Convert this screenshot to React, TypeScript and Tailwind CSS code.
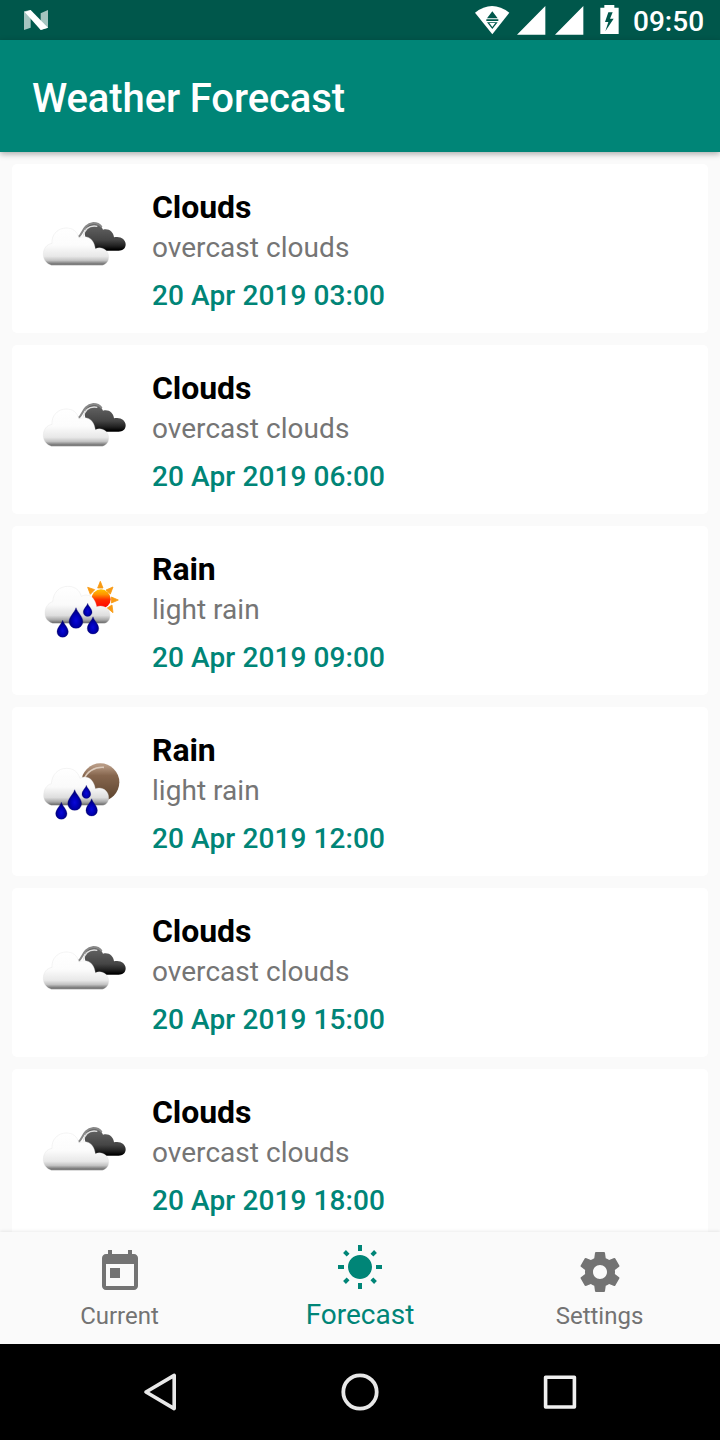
import React from 'react';

type Kind = 'clouds' | 'rainDay' | 'rainNight';

interface Entry {
  kind: Kind;
  title: string;
  description: string;
  date: string;
}

const entries: Entry[] = [
  { kind: 'clouds', title: 'Clouds', description: 'overcast clouds', date: '20 Apr 2019 03:00' },
  { kind: 'clouds', title: 'Clouds', description: 'overcast clouds', date: '20 Apr 2019 06:00' },
  { kind: 'rainDay', title: 'Rain', description: 'light rain', date: '20 Apr 2019 09:00' },
  { kind: 'rainNight', title: 'Rain', description: 'light rain', date: '20 Apr 2019 12:00' },
  { kind: 'clouds', title: 'Clouds', description: 'overcast clouds', date: '20 Apr 2019 15:00' },
  { kind: 'clouds', title: 'Clouds', description: 'overcast clouds', date: '20 Apr 2019 18:00' },
];

const DROP = 'M0 -31C4 -17 20 -6 20 10A20 19 0 0 1 -20 10C-20 -6 -4 -17 0 -31Z';

function Gradients() {
  return (
    <svg width="0" height="0" className="absolute" aria-hidden="true">
      <defs>
        <linearGradient id="white-cloud" gradientUnits="userSpaceOnUse" x1="0" y1="70" x2="0" y2="182">
          <stop offset="0" stopColor="#ffffff" />
          <stop offset="0.45" stopColor="#fcfcfc" />
          <stop offset="0.75" stopColor="#e8e8e8" />
          <stop offset="0.86" stopColor="#c4c4c4" />
          <stop offset="0.94" stopColor="#808080" />
          <stop offset="1" stopColor="#707070" />
        </linearGradient>
        <linearGradient id="rain-cloud" gradientUnits="userSpaceOnUse" x1="0" y1="58" x2="0" y2="170">
          <stop offset="0" stopColor="#ffffff" />
          <stop offset="0.5" stopColor="#fafafa" />
          <stop offset="0.78" stopColor="#dedede" />
          <stop offset="0.9" stopColor="#a8a8a8" />
          <stop offset="1" stopColor="#585858" />
        </linearGradient>
        <linearGradient id="dark-cloud" gradientUnits="userSpaceOnUse" x1="0" y1="55" x2="0" y2="138">
          <stop offset="0" stopColor="#666666" />
          <stop offset="0.6" stopColor="#454545" />
          <stop offset="0.82" stopColor="#202020" />
          <stop offset="0.95" stopColor="#000000" />
        </linearGradient>
        <linearGradient id="sun" gradientUnits="userSpaceOnUse" x1="0" y1="66" x2="0" y2="120">
          <stop offset="0" stopColor="#ffc400" />
          <stop offset="0.3" stopColor="#ff9500" />
          <stop offset="0.6" stopColor="#ff2c00" />
          <stop offset="1" stopColor="#ff0800" />
        </linearGradient>
        <linearGradient id="moon" gradientUnits="userSpaceOnUse" x1="0" y1="46" x2="0" y2="148">
          <stop offset="0" stopColor="#b79a84" />
          <stop offset="0.3" stopColor="#86664e" />
          <stop offset="1" stopColor="#5e452f" />
        </linearGradient>
        <radialGradient id="drop" cx="0.5" cy="0.62" r="0.5">
          <stop offset="0" stopColor="#0808d8" />
          <stop offset="0.5" stopColor="#0000b8" />
          <stop offset="1" stopColor="#000078" />
        </radialGradient>
      </defs>
    </svg>
  );
}

function RainCloud() {
  return (
    <g>
      <path
        d="M68 169C54 164 45 154 45 140C45 122 53 108 68 104C70 76 88 58 114 58C134 58 148 68 154 88C172 78 194 86 200 119C222 112 240 126 240 146C240 160 232 169 218 169Z"
        fill="url(#rain-cloud)"
        stroke="#dddddd"
        strokeOpacity="0.5"
        strokeWidth="2"
      />
      <g fill="url(#drop)" stroke="#000070" strokeWidth="1">
        <path transform="translate(98 186) scale(0.85)" d={DROP} />
        <path transform="translate(138 154) scale(1.03)" d={DROP} />
        <path transform="translate(173 129) scale(0.66)" d={DROP} />
        <path transform="translate(189 176) scale(0.86)" d={DROP} />
      </g>
    </g>
  );
}

function WeatherIcon({ kind }: { kind: Kind }) {
  if (kind === 'clouds') {
    return (
      <svg width="110" height="80" viewBox="0 0 330 240" className="mt-[41px] shrink-0 blur-[0.6px]">
        <path
          d="M166 96C160 70 172 54 190 54C204 54 214 62 219 74C236 69 250 80 252 97C270 92 287 102 287 118C287 131 278 137 266 137H198Z"
          fill="url(#dark-cloud)"
        />
        <path d="M145 96C158 90 158 58 190 54C202 54 210 59 215 66" fill="none" stroke="#888888" strokeWidth="6" />
        <path d="M160 92C166 68 180 60 202 64" fill="none" stroke="#e0e0e0" strokeWidth="4" />
        <path
          d="M64 181C50 176 40 166 40 148C40 130 50 118 66 115C64 88 84 69 109 69C128 69 141 78 147 99C170 88 192 100 196 131C216 123 236 136 236 156C236 170 228 178 217 181Z"
          fill="url(#white-cloud)"
          stroke="#dddddd"
          strokeOpacity="0.5"
          strokeWidth="2"
        />
      </svg>
    );
  }
  if (kind === 'rainDay') {
    return (
      <svg width="110" height="80" viewBox="0 0 330 240" className="mt-[41px] shrink-0 blur-[0.6px]">
        <g fill="#f99a12" stroke="#f99a12" strokeWidth="2.5" strokeLinejoin="round">
          <path d="M203 63L211 43L219 63Z" />
          <path d="M228 69L249 60L241 81Z" />
          <path d="M244 90L265 99L244 108Z" />
          <path d="M232 123L249 137L246 114Z" />
          <path d="M173 61L194 68L181 82Z" />
        </g>
        <circle cx="213" cy="96" r="29" fill="url(#sun)" />
        <RainCloud />
      </svg>
    );
  }
  return (
    <svg width="110" height="80" viewBox="0 0 330 240" className="mt-[43px] shrink-0 blur-[0.6px]">
      <circle cx="211" cy="97" r="57" fill="url(#moon)" />
      <path d="M162 88C170 66 192 50 222 52" fill="none" stroke="#dccbbd" strokeWidth="5" />
      <g transform="translate(-4 -3)">
        <RainCloud />
      </g>
    </svg>
  );
}

function StatusBar() {
  return (
    <header className="flex h-10 shrink-0 items-center justify-between bg-[#00574b] pl-6 pr-[15px] text-white">
      <svg width="24" height="20" viewBox="0 0 72 60">
        <path d="M0 4L20 0V53L0 60Z M50 10L72 0V53L50 60Z" fill="#a5c5c0" />
        <path d="M2 6L20 0L72 53L50 60Z" fill="#ffffff" />
      </svg>
      <div className="flex items-center">
        <svg width="158" height="40" viewBox="0 0 474 120" fill="#ffffff">
          <path d="M0 38Q51 -2 103 38L52 103Z" />
          <path d="M52 34L68 55H36Z M34 58H70V63H34Z M36 67H68L52 87Z" fill="#00574b" />
          <path d="M43 69H61L52 81Z" />
          <path d="M126 104L211 18V104Z M240 104L325 18V104Z" />
          <path d="M376 23H388V15H418V23H431V102H376Z" />
          <path d="M400 37L390 66H400L391 94L416 56H405L413 37Z" fill="#00574b" />
        </svg>
        <span className="mt-[3px] w-[72px] whitespace-nowrap text-[28px] font-medium leading-10">09:50</span>
      </div>
    </header>
  );
}

function ForecastCard({ entry }: { entry: Entry }) {
  return (
    <li className="flex h-[169px] shrink-0 items-start rounded-[5px] bg-white pl-[18px]">
      <WeatherIcon kind={entry.kind} />
      <div className="ml-3 pt-6">
        <h2 className="text-[32px] font-bold leading-[38px] tracking-[-0.1px] text-black">{entry.title}</h2>
        <p className="mt-[5px] text-[28px] leading-[33px] tracking-[0.04px] text-[#757575]">{entry.description}</p>
        <p className="mt-[15px] text-[28px] font-medium leading-[33px] tracking-[0.1px] text-[#008577]">{entry.date}</p>
      </div>
    </li>
  );
}

function BottomNav() {
  return (
    <nav className="z-10 grid h-28 shrink-0 grid-cols-3 bg-[#fafafa] text-[#737373] shadow-[0_-1px_3px_rgba(0,0,0,0.08)]">
      <div className="flex flex-col items-center pt-4">
        <svg width="48" height="48" viewBox="0 0 24 24" fill="currentColor">
          <path d="M19 3h-1V1h-2v2H8V1H6v2H5c-1.11 0-1.99.9-1.99 2L3 19c0 1.1.89 2 2 2h14c1.1 0 2-.9 2-2V5c0-1.1-.9-2-2-2zm0 16H5V8h14v11zM7 10h5v5H7v-5z" />
        </svg>
        <span className="mt-1.5 pr-px text-2xl leading-7">Current</span>
      </div>
      <div className="flex flex-col items-center pt-3 text-[#008577]">
        <svg width="48" height="48" viewBox="0 0 24 24" fill="currentColor">
          <path d="M6.76 4.84l-1.8-1.79-1.41 1.41 1.79 1.79 1.42-1.41zM4 10.5H1v2h3v-2zm9-9.95h-2V3.5h2V.55zm7.45 3.91l-1.41-1.41-1.79 1.79 1.41 1.41 1.79-1.79zm-3.21 13.7l1.79 1.8 1.41-1.41-1.8-1.79-1.4 1.4zM20 10.5v2h3v-2h-3zm-8-5c-3.31 0-6 2.69-6 6s2.69 6 6 6 6-2.69 6-6-2.69-6-6-6zm-1 16.95h2V19.5h-2v2.95zm-7.45-3.91l1.41 1.41 1.79-1.8-1.41-1.41-1.79 1.8z" />
        </svg>
        <span className="mt-1.5 text-[28px] leading-[33px]">Forecast</span>
      </div>
      <div className="flex flex-col items-center pt-4">
        <svg width="48" height="48" viewBox="0 0 24 24" fill="currentColor">
          <path d="M19.43 12.98c.04-.32.07-.64.07-.98s-.03-.66-.07-.98l2.11-1.65c.19-.15.24-.42.12-.64l-2-3.46c-.12-.22-.39-.3-.61-.22l-2.49 1c-.52-.4-1.08-.73-1.69-.98l-.38-2.65C14.46 2.18 14.25 2 14 2h-4c-.25 0-.46.18-.49.42l-.38 2.65c-.61.25-1.17.59-1.69.98l-2.49-1c-.23-.09-.49 0-.61.22l-2 3.46c-.13.22-.07.49.12.64l2.11 1.65c-.04.32-.07.65-.07.98s.03.66.07.98l-2.11 1.65c-.19.15-.24.42-.12.64l2 3.46c.12.22.39.3.61.22l2.49-1c.52.4 1.08.73 1.69.98l.38 2.65c.03.24.24.42.49.42h4c.25 0 .46-.18.49-.42l.38-2.65c.61-.25 1.17-.59 1.69-.98l2.49 1c.23.09.49 0 .61-.22l2-3.46c.12-.22.07-.49-.12-.64l-2.11-1.65zM12 15.5c-1.93 0-3.5-1.57-3.5-3.5s1.57-3.5 3.5-3.5 3.5 1.57 3.5 3.5-1.57 3.5-3.5 3.5z" />
        </svg>
        <span className="mt-1.5 pr-px text-2xl leading-7">Settings</span>
      </div>
    </nav>
  );
}

function SystemNav() {
  return (
    <footer className="flex h-24 shrink-0 items-center justify-between bg-black px-[140px]">
      <svg width="40" height="40" viewBox="0 0 40 40" fill="none" stroke="#e8e8e8" strokeWidth="3.6" strokeLinejoin="round">
        <path d="M34.2 3.4V36.6L6 20Z" />
      </svg>
      <svg width="40" height="40" viewBox="0 0 40 40" fill="none" stroke="#e8e8e8" strokeWidth="3.8">
        <circle cx="20" cy="20" r="16.7" />
      </svg>
      <svg width="40" height="40" viewBox="0 0 40 40" fill="none" stroke="#f0f0f0" strokeWidth="3.6" strokeLinejoin="round">
        <path d="M5.6 5.2H34.4V35H5.6Z" />
      </svg>
    </footer>
  );
}

export default function App() {
  return (
    <div className="flex h-[1440px] w-[720px] flex-col overflow-hidden bg-[#fafafa] font-['Roboto',sans-serif]">
      <Gradients />
      <StatusBar />
      <div className="z-10 flex h-28 shrink-0 items-center bg-[#008577] px-8 pt-1.5 shadow-[0_2px_6px_rgba(0,0,0,0.32)]">
        <h1 className="text-[40px] font-medium leading-[48px] tracking-[-0.1px] text-white">Weather Forecast</h1>
      </div>
      <ul className="flex min-h-0 flex-1 flex-col gap-3 overflow-hidden px-3 pt-3">
        {entries.map((entry) => (
          <ForecastCard key={entry.date} entry={entry} />
        ))}
      </ul>
      <BottomNav />
      <SystemNav />
    </div>
  );
}
